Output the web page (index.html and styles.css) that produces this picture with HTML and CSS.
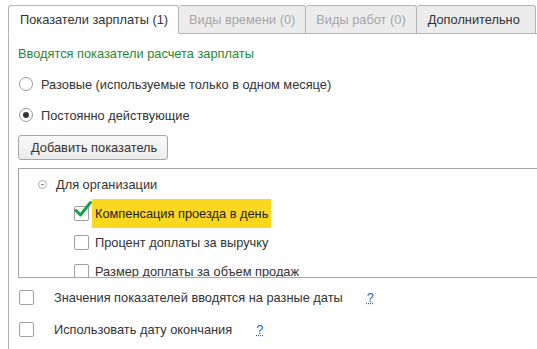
FILE: index.html
```html
<!DOCTYPE html>
<html>
  <head>
    <meta charset="utf-8">
    <title>Показатели зарплаты</title>
    <link rel="stylesheet" href="styles.css">
  </head>
  <body>
    <div class="tabbar">
      <div class="tab active">Показатели зарплаты (1)</div>
      <div class="tab disabled">Виды времени (0)</div>
      <div class="tab disabled">Виды работ (0)</div>
      <div class="tab last">Дополнительно</div>
      <div class="tab-rest"></div>
    </div>

    <div class="page">
      <div class="title">Вводятся показатели расчета зарплаты</div>

      <div class="radio-row first">
        <span class="radio"></span>
        <span>Разовые (используемые только в одном месяце)</span>
      </div>
      <div class="radio-row">
        <span class="radio on"></span>
        <span>Постоянно действующие</span>
      </div>

      <div class="btn">Добавить показатель</div>

      <div class="tree">
        <div class="tree-row group">
          <span class="minus"></span>
          <span>Для организации</span>
        </div>
        <div class="tree-row item">
          <span class="check">
            <svg width="22" height="20" viewBox="0 0 22 20">
              <path d="M3 10.5 L7.5 15 L17.5 2.5" fill="none" stroke="#17a04a" stroke-width="3" stroke-linecap="round" stroke-linejoin="round"/>
            </svg>
          </span>
          <span class="label selected">Компенсация проезда в день</span>
        </div>
        <div class="tree-row item">
          <span class="check"></span>
          <span class="label">Процент доплаты за выручку</span>
        </div>
        <div class="tree-row item">
          <span class="check"></span>
          <span class="label">Размер доплаты за объем продаж</span>
        </div>
      </div>

      <div class="opt-row first">
        <span class="check"></span>
        <span class="opt-text">Значения показателей вводятся на разные даты</span>
        <span class="help">?</span>
      </div>
      <div class="opt-row">
        <span class="check"></span>
        <span class="opt-text">Использовать дату окончания</span>
        <span class="help">?</span>
      </div>
    </div>
  </body>
</html>
```

FILE: styles.css
```css
body{
  margin: 0;
  background: #fff;
  font-family: "Liberation Sans", Arial, sans-serif;
  font-size: 12.8px;
  color: #333;
  overflow: hidden;
}
.tabbar{
  display: flex;
  padding: 5px 0 0 8px;
}
.tab{
  height: 27px;
  line-height: 27px;
  padding: 0 10px;
  border: 1px solid #b4b4b4;
  border-left: none;
  background: #ececec;
  border-radius: 3px 3px 0 0;
  white-space: nowrap;
}
.tab.active{
  background: #fff;
  border-left: 1px solid #b4b4b4;
  border-bottom-color: #fff;
  padding: 0 10px 0 11px;
}
.tab.disabled{
  color: #a6a6a6;
}
.tab.last{
  padding: 0 15px 0 11px;
}
.tab-rest{
  flex: 1;
  border-bottom: 1px solid #b4b4b4;
}
.page{
  margin-left: 8px;
  border-left: 1px solid #b4b4b4;
  padding: 10px 0 20px 9px;
}
.title{
  height: 20px;
  line-height: 20px;
  color: #23892f;
}
.radio-row{
  display: flex;
  align-items: center;
  height: 20px;
  margin-top: 11px;
  gap: 8px;
}
.radio-row.first{
  margin-top: 10px;
}
.radio{
  width: 12px;
  height: 12px;
  margin-left: 1px;
  border: 1px solid #999;
  border-radius: 50%;
  background: #fff;
  position: relative;
  flex: none;
}
.radio.on::after{
  content: "";
  position: absolute;
  left: 3px;
  top: 3px;
  width: 6px;
  height: 6px;
  border-radius: 50%;
  background: #333;
}
.btn{
  display: inline-block;
  margin-top: 10px;
  height: 23px;
  line-height: 23px;
  padding: 0 10px 0 12px;
  border: 1px solid #a6a6a6;
  border-radius: 3px;
  background: linear-gradient(#fafafa, #ebebeb);
}
.tree{
  margin-top: 8px;
  margin-right: -20px;
  height: 108px;
  border: 1px solid #a6a6a6;
  overflow: hidden;
}
.tree-row{
  display: flex;
  align-items: center;
  height: 29px;
}
.tree-row.group{
  padding-left: 19px;
  margin-top: 1px;
}
.minus{
  width: 7px;
  height: 7px;
  border: 1px solid #aaa;
  border-radius: 50%;
  position: relative;
  margin-right: 9px;
}
.minus::after{
  content: "";
  position: absolute;
  left: 2px;
  top: 3px;
  width: 3px;
  height: 1px;
  background: #888;
}
.tree-row.item{
  padding-left: 55px;
}
.check{
  width: 13px;
  height: 13px;
  border: 1px solid #a0a0a0;
  border-radius: 2px;
  background: #fff;
  position: relative;
  flex: none;
}
.check svg{
  position: absolute;
  left: -2px;
  top: -7px;
}
.label{
  margin-left: 3px;
  height: 29px;
  line-height: 29px;
  padding: 0 3px;
}
.label.selected{
  background: #fbd81f;
  color: #222;
}
.opt-row{
  display: flex;
  align-items: center;
  height: 20px;
  margin-top: 12px;
  padding-left: 1px;
}
.opt-row.first{
  margin-top: 9px;
}
.opt-text{
  margin-left: 20px;
}
.help{
  margin-left: 24px;
  color: #1565c0;
  text-decoration: underline dotted;
}
```
